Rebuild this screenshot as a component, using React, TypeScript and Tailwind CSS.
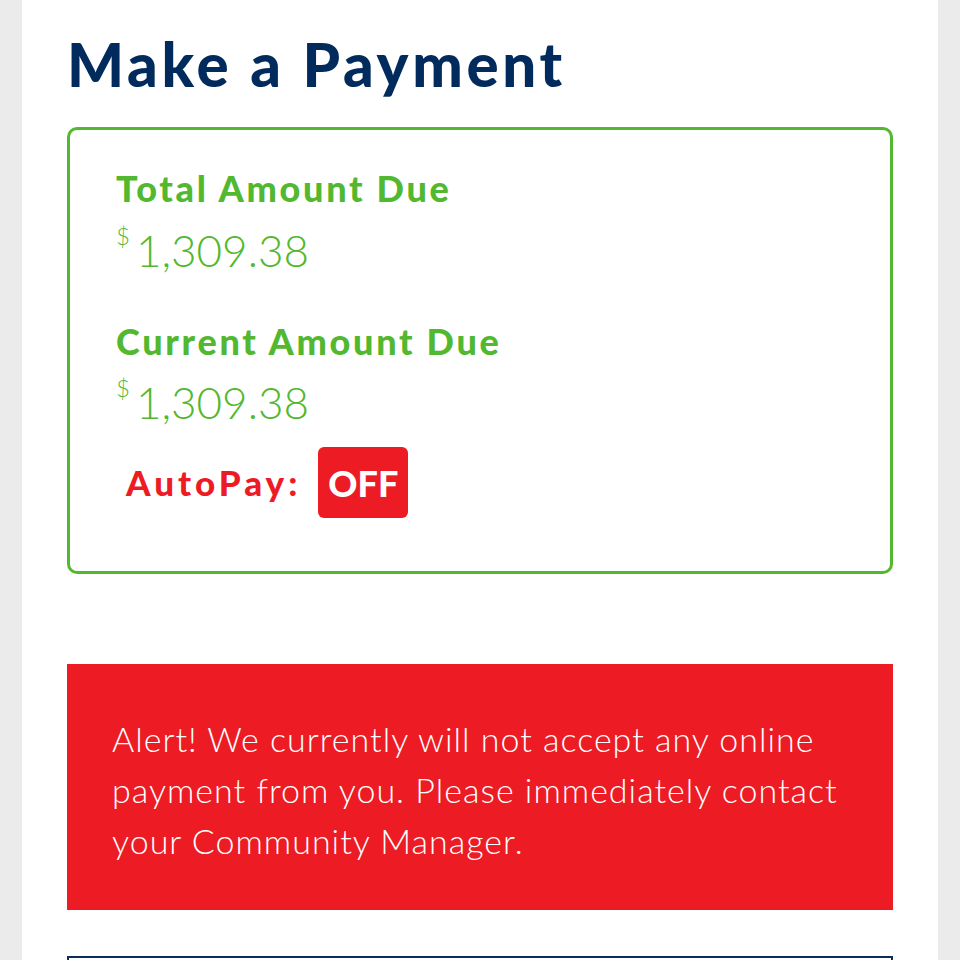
export default function App() {
  return (
    <div className="min-h-screen bg-[#ebebeb] px-[22px] font-['Lato',sans-serif]">
      <div className="min-h-screen bg-white px-[45px] pt-[34px]">
        <h1 className="text-[60px] leading-none font-black text-[#002b5c] tracking-[3.7px]">Make a Payment</h1>

        <div className="mt-[33px] rounded-[10px] border-[3px] border-[#52b82f] pl-[46px] pt-[40px] pb-[53px]">
          <div className="text-[36px] leading-none font-black text-[#52b82f] tracking-[2.7px]">Total Amount Due</div>
          <div className="mt-[22px] flex items-start text-[#52b82f]">
            <span className="text-[24px] leading-none font-light mr-[6px] -mt-[4px]">$</span>
            <span className="text-[44px] leading-none font-light">1,309.38</span>
          </div>

          <div className="mt-[51px] text-[36px] leading-none font-black text-[#52b82f] tracking-[2.7px]">Current Amount Due</div>
          <div className="mt-[21px] flex items-start text-[#52b82f]">
            <span className="text-[24px] leading-none font-light mr-[6px] -mt-[4px]">$</span>
            <span className="text-[44px] leading-none font-light">1,309.38</span>
          </div>

          <div className="mt-[23px] flex items-center pl-[10px] gap-[17px]">
            <span className="text-[35px] leading-none font-black text-[#ed1c24] tracking-[4px]">AutoPay:</span>
            <span className="flex h-[71px] w-[90px] items-center justify-center rounded-[6px] bg-[#ed1c24] text-[36px] leading-none font-black text-white">
              OFF
            </span>
          </div>
        </div>

        <div className="mt-[90px] bg-[#ed1c24] px-[45px] pt-[49px] pb-[44px]">
          <p className="text-[34px] leading-[51px] font-light text-white tracking-[1px]">
            Alert! We currently will not accept any online
            <br />
            payment from you. Please immediately contact
            <br />
            your Community Manager.
          </p>
        </div>

        <div className="mt-[46px] h-[60px] border-2 border-[#0a2d5e]"></div>
      </div>
    </div>
  )
}
